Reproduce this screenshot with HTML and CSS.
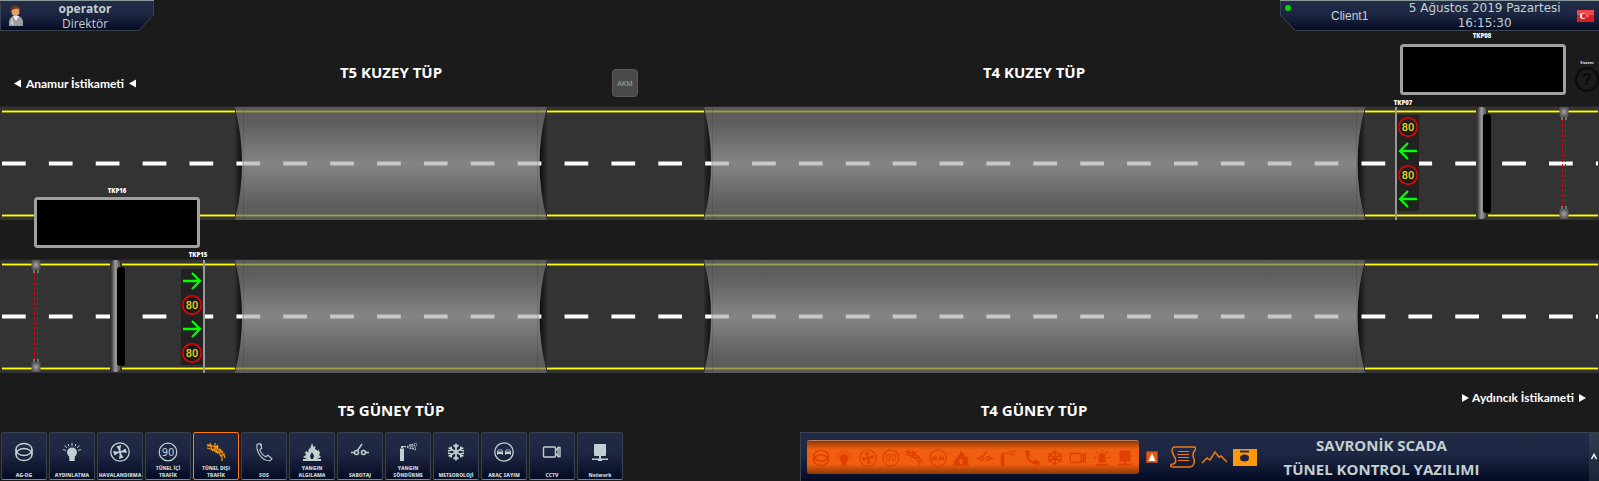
FILE: index.html
```html
<!DOCTYPE html>
<html lang="tr">
<head>
<meta charset="utf-8">
<title>Savronik SCADA</title>
<link rel="stylesheet" href="styles.css">
</head>
<body>
<svg class="defs" aria-hidden="true">
  <symbol id="i-ring" viewBox="0 0 20 20"><g fill="none" stroke="currentColor" stroke-width="1.500"><ellipse cx="10" cy="7.500" rx="8" ry="6"/><ellipse cx="10" cy="12.500" rx="8" ry="6"/><path d="M2 7v6M18 7v6"/></g></symbol>
  <symbol id="i-bulb" viewBox="0 0 20 20"><path fill="currentColor" d="M10 5.500a5 5 0 0 0-5 5c0 2 1.500 3 2.300 4.500V19h5.400v-4c.8-1.500 2.300-2.500 2.300-4.500a5 5 0 0 0-5-5z"/><path fill="none" stroke="currentColor" d="M10 1v3M6 2l1 2.500M14 2l-1 2.500M2.500 3.500l2.500 2.500M17.500 3.500l-2.500 2.500M1 7.500l3 1M19 7.500l-3 1"/></symbol>
  <symbol id="i-fan" viewBox="0 0 20 20"><circle cx="10" cy="10" r="9.200" fill="none" stroke="currentColor" stroke-width="1.300"/><path fill="currentColor" d="M10 10L6.500 4.500 11 3zM10 10l5.500-3.500L17 11zM10 10l3.500 5.500L9 17zM10 10l-5.500 3.500L3 9z"/><circle cx="10" cy="10" r="1.800" fill="currentColor"/></symbol>
  <symbol id="i-90" viewBox="0 0 20 20"><circle cx="10" cy="10" r="8.800" fill="none" stroke="currentColor" stroke-width="1.200"/><text x="10" y="13.800" class="i-num">90</text></symbol>
  <symbol id="i-road" viewBox="0 0 20 20"><path fill="none" stroke="currentColor" stroke-width="1.200" d="M1 2.500l7 2 6 3.500 4 5 1 3M1 6l7 2 5 3 3 4v4M1 4h7M4 1l2 7M9 1v9M6 9l6-6M12 4l-2 7M15 7l-4 4M19 12l-5 2M13 11l4-2"/></symbol>
  <symbol id="i-phone" viewBox="0 0 20 20"><path fill="none" stroke="currentColor" stroke-width="1.100" d="M3 2.500l3-1 1.800 4.500-2 1.800c1 3 3 5.500 6 7l2-1.500 4.200 3.500-2 2c-4 0-8-2-10.500-6S2.500 6 3 2.500zM7.300 2v2.500"/></symbol>
  <symbol id="i-call" viewBox="0 0 20 20"><path fill="currentColor" d="M2.500 2l4-.5 1.500 5-2 2c1.200 2.500 3 4.300 5.500 5.500l2-2 5 1.500-.5 4.500C9 18.500 2 11 2.500 2z"/></symbol>
  <symbol id="i-fire" viewBox="0 0 20 20"><path fill="currentColor" d="M10 1l1.500 4 2-1-.5 3 3 2 .5-1.500L18 11l-1 2 2 2-4 2h4v2H1v-2h4l-4-2 3-2-1-3 2-1 1 2 1-5 1 1z"/><path class="i-hole" d="M10 10l2 4-1 3H9l-1-3z"/></symbol>
  <symbol id="i-switch" viewBox="0 0 20 20"><g fill="none" stroke="currentColor" stroke-width="1.500"><circle cx="6.500" cy="10.500" r="2"/><circle cx="13.500" cy="10.500" r="2"/><path d="M1 10.500h3.500M15.500 10.500H19M7.500 8.500L12 2"/></g></symbol>
  <symbol id="i-ext" viewBox="0 0 20 20"><path fill="currentColor" d="M2 6.500h4V19H2zM3 4h2v2H3zM4 4h4v1.200H4z"/><path fill="none" stroke="currentColor" stroke-dasharray="1.500 1" d="M9 4.500L19 1M9 5l10 0M9 5.500L18 8M11 3l5-1M12 6l6 1M13 4l6-1"/></symbol>
  <symbol id="i-snow" viewBox="0 0 20 20"><g fill="none" stroke="currentColor" stroke-width="1.700"><path d="M10 1.500v17M2.600 5.800l14.800 8.400M17.400 5.800L2.600 14.200M7.500 3L10 5.500 12.500 3M7.500 17l2.500-2.500 2.500 2.500M2 9l3.500-1L5 4.500M18 11l-3.500 1 .5 3.500M18 9l-3.500-1 .5-3.500M2 11l3.500 1L5 15.500"/></g></symbol>
  <symbol id="i-cars" viewBox="0 0 20 20"><circle cx="10" cy="10" r="9.200" fill="none" stroke="currentColor" stroke-width="1.300"/><path fill="currentColor" d="M4 7.500h4l1 2.300v3H8v-.8H4v.8H3v-3zM12 7.500h4l1 2.300v3h-1v-.8h-4v.8h-1v-3z"/><path class="i-hole" d="M4.500 8.300h3l.4 1.200H4.100zM12.500 8.300h3l.4 1.200h-3.800z"/></symbol>
  <symbol id="i-cam" viewBox="0 0 20 20"><g fill="none" stroke="currentColor" stroke-width="1.400"><rect x="1.500" y="5" width="12" height="10" rx="1"/><path d="M13.500 8.500L16 6v8l-2.500-2.500M16 5.500h2v9h-2z"/></g></symbol>
  <symbol id="i-net" viewBox="0 0 20 20"><path fill="currentColor" d="M4 3q0-1 1-1h10q1 0 1 1v10q0 1-1 1H5q-1 0-1-1zM9 14h2v2.500h7V18h-6v1H8v-1H2v-1.500h7z"/></symbol>
  <symbol id="i-siren" viewBox="0 0 20 20"><path fill="currentColor" d="M6 15V8.500a4 4 0 0 1 8 0V15zM3 16.500h14V19H3z"/><path fill="none" stroke="currentColor" stroke-width="1.400" d="M10 1v2M4 3l2 2M16 3l-2 2M1 9.500h3M16 9.500h3"/></symbol>
</svg>

<header class="top">
  <div class="user">
    <svg class="shape" viewBox="0 0 154 31" aria-hidden="true">
      <defs><linearGradient id="navy" x1="0" y1="0" x2="0" y2="1"><stop offset="0" stop-color="#232c46"/><stop offset=".45" stop-color="#1d2642"/><stop offset="1" stop-color="#040b24"/></linearGradient></defs>
      <path d="M.5.500h153V15L138.500 30.500H.5z" fill="url(#navy)" stroke="#3b444e"/><path d="M0 .500h154" stroke="#87989a"/>
    </svg>
    <svg class="avatar" viewBox="0 0 16 22" aria-hidden="true">
      <path d="M1 21v-4c0-3 2-5 4-6h6c2 1 4 3 4 6v4z" fill="#9a9c9e"/><path d="M5 11l3 5 3-5z" fill="#f4f4f4"/><path d="M4 12l2 8-4-1z" fill="#c5c7c8"/>
      <ellipse cx="7.500" cy="6.500" rx="4" ry="5" fill="#e0a070"/><path d="M2.500 7C1 1 6 0 8 .5c4 0 5 3 4 7l-1.500-4-5 .5z" fill="#6b3a1c"/>
    </svg>
    <div class="who"><strong>operator</strong><span>Direktör</span></div>
  </div>
  <div class="station">
    <svg class="shape" viewBox="0 0 319 31" preserveAspectRatio="none" aria-hidden="true">
      <path d="M.5.500H320v30H15.500L.5 15.500z" fill="url(#navy)" stroke="#3b444e"/><path d="M0 .500h320" stroke="#87989a"/>
    </svg>
    <i class="led"></i>
    <span class="client">Client1</span>
    <time class="clock" datetime="2019-08-05T16:15:30">5 Ağustos 2019 Pazartesi<br>16:15:30</time>
    <svg class="flag" viewBox="0 0 17 12" role="img" aria-label="Türkçe"><rect width="17" height="12" fill="#e01b22"/><path d="M0 0h17v5H0z" fill="#ee4a4e"/><circle cx="6" cy="6" r="3" fill="#fff"/><circle cx="7" cy="6" r="2.300" fill="#e6282e"/><path d="M9 6l1-.4.600-1 .2 1.100 1.200.3-1.200.4-.2 1-.6-1z" fill="#fff"/></svg>
  </div>
</header>

<main class="map">
<svg class="canvas" viewBox="0 31 1599 401" role="img" aria-label="Tünel trafik haritası">
  <defs>
    <linearGradient id="tube" x1="0" y1="0" x2="0" y2="1"><stop offset="0" stop-color="#6c6c6c"/><stop offset=".15" stop-color="#757575"/><stop offset=".5" stop-color="#adadad"/><stop offset=".85" stop-color="#757575"/><stop offset="1" stop-color="#6c6c6c"/></linearGradient>
    <linearGradient id="pole"><stop offset="0" stop-color="#333"/><stop offset=".5" stop-color="#9a9a9a"/><stop offset="1" stop-color="#555"/></linearGradient>
    <linearGradient id="mouthL"><stop offset="0" stop-color="#2e2e2e"/><stop offset="1" stop-color="#0c0c0c"/></linearGradient>
    <linearGradient id="mouthR"><stop offset="0" stop-color="#0c0c0c"/><stop offset="1" stop-color="#2e2e2e"/></linearGradient>
    <radialGradient id="knob"><stop offset="0" stop-color="#a5a5a5"/><stop offset="1" stop-color="#555"/></radialGradient>
    <g id="road">
      <rect x="0" y="107" width="1599" height="113" fill="#333"/>
      <path d="M0 106.500h1599" stroke="#262626"/>
      <path d="M2 111.500h1596M2 215.500h1596" stroke="#8a8a14" stroke-width="3"/>
      <path d="M2 111.500h1596M2 215.500h1596" stroke="#ff0"/>
      <path d="M235 107q15 56 0 113z" fill="url(#mouthL)"/><path d="M704 107q15 56 0 113z" fill="url(#mouthL)"/>
      <path d="M547 107q-15 56 0 113z" fill="url(#mouthR)"/><path d="M1365 107q-15 56 0 113z" fill="url(#mouthR)"/>
      <path d="M2 163.500h1596" stroke="#fff" stroke-width="4" stroke-dasharray="23.700 23.180"/>
      <path d="M235 107H547q-15 56 0 113H235q14-57 0-113zM704 107h661q-15 56 0 113H704q14-57 0-113z" fill="url(#tube)" opacity=".67"/>
      <path d="M243.500 107v113M537.500 107v113M712.500 107v113M1356.500 107v113" stroke="#000" opacity=".1"/>
    </g>
    <g id="limit"><circle r="9.300" fill="#1c1c1c" stroke="#f00000" stroke-width="1.600"/><text y="4" class="limit">80</text></g>
    <path id="arrow" d="M-8 0H9M0-8L-8 0l8 8" fill="none" stroke="#0f0" stroke-width="2.300"/>
    <g id="lamp"><rect x="-1" y="109" width="12" height="108" fill="#333"/><rect x="0" y="107" width="9" height="112" rx="4" fill="url(#pole)"/><rect x="6" y="114" width="8" height="99" rx="3" fill="#000"/></g>
    <g id="beam"><path d="M-1.500 119v89M1.500 119v89" stroke="#d00" stroke-dasharray="3 2"/><rect x="-4.500" y="107" width="9" height="10" rx="1" fill="url(#knob)"/><rect x="-4.500" y="209" width="9" height="10" rx="1" fill="url(#knob)"/><path d="M-2 117v3M2 117v3M-2 206v3M2 206v3" stroke="#888" stroke-width="1.500"/></g>
  </defs>
  <use href="#road"/>
  <use href="#road" y="153"/>

  <g class="title">
    <text x="391" y="78">T5 KUZEY TÜP</text><text x="1034" y="78">T4 KUZEY TÜP</text>
    <text x="391" y="416">T5 GÜNEY TÜP</text><text x="1034" y="416">T4 GÜNEY TÜP</text>
  </g>
  <g class="way">
    <text x="75" y="88">Anamur İstikameti</text><text x="1523" y="402">Aydıncık İstikameti</text>
    <path d="M21 79.500v8l-7-4zM136 79.500v8l-7-4zM1462 394v8l7-4zM1579 394v8l7-4z"/>
  </g>

  <g class="board"><rect x="1401.500" y="45.500" width="163" height="48" rx="2"/><rect x="35.500" y="198.500" width="163" height="48" rx="2"/></g>
  <g class="tag"><text x="1482" y="38">TKP08</text><text x="1403" y="105">TKP07</text><text x="117" y="193">TKP16</text><text x="198" y="257">TKP15</text></g>
  <text class="hint" x="1587" y="64">Sistem</text>

  <rect x="1397" y="115" width="22" height="96" fill="#222"/><rect x="1395" y="107" width="2" height="113" fill="#999"/>
  <use href="#limit" x="1408" y="127"/><use href="#arrow" x="1408" y="151"/><use href="#limit" x="1408" y="175"/><use href="#arrow" x="1408" y="199"/>
  <use href="#lamp" x="1477"/><use href="#beam" x="1564"/>

  <rect x="181" y="269" width="22" height="96" fill="#222"/><rect x="203" y="260" width="2" height="113" fill="#999"/>
  <use href="#arrow" transform="translate(192 281) scale(-1 1)"/><use href="#limit" x="192" y="305"/><use href="#arrow" transform="translate(192 329) scale(-1 1)"/><use href="#limit" x="192" y="353"/>
  <use href="#lamp" x="111" y="153"/><use href="#beam" x="36" y="153"/>

  <foreignObject x="612" y="69" width="26" height="28"><button class="akm">AKM</button></foreignObject>
  <foreignObject x="1575" y="67" width="24" height="25"><button class="help" aria-label="Sistem">?</button></foreignObject>
</svg>
</main>

<footer class="bottom">
  <nav class="tiles">
    <button class="tile"><svg><use href="#i-ring"/></svg><span>AG-OG</span></button>
    <button class="tile"><svg><use href="#i-bulb"/></svg><span>AYDINLATMA</span></button>
    <button class="tile"><svg><use href="#i-fan"/></svg><span>HAVALANDIRMA</span></button>
    <button class="tile"><svg><use href="#i-90"/></svg><span>TÜNEL İÇİ<br>TRAFİK</span></button>
    <button class="tile active"><svg><use href="#i-road"/></svg><span>TÜNEL DIŞI<br>TRAFİK</span></button>
    <button class="tile"><svg><use href="#i-phone"/></svg><span>SOS</span></button>
    <button class="tile"><svg><use href="#i-fire"/></svg><span>YANGIN<br>ALGILAMA</span></button>
    <button class="tile"><svg><use href="#i-switch"/></svg><span>SABOTAJ</span></button>
    <button class="tile"><svg><use href="#i-ext"/></svg><span>YANGIN<br>SÖNDÜRME</span></button>
    <button class="tile"><svg><use href="#i-snow"/></svg><span>METEOROLOJİ</span></button>
    <button class="tile"><svg><use href="#i-cars"/></svg><span>ARAÇ SAYIM</span></button>
    <button class="tile"><svg><use href="#i-cam"/></svg><span>CCTV</span></button>
    <button class="tile"><svg><use href="#i-net"/></svg><span>Network</span></button>
  </nav>
  <section class="status">
    <div class="alarms">
      <svg><use href="#i-ring"/></svg><svg><use href="#i-bulb"/></svg><svg><use href="#i-fan"/></svg><svg><use href="#i-90"/></svg><svg><use href="#i-road"/></svg><svg><use href="#i-cars"/></svg><svg><use href="#i-fire"/></svg><svg><use href="#i-switch"/></svg><svg><use href="#i-ext"/></svg><svg><use href="#i-call"/></svg><svg><use href="#i-snow"/></svg><svg><use href="#i-cam"/></svg><svg><use href="#i-siren"/></svg><svg><use href="#i-net"/></svg>
    </div>
    <button class="up" aria-label="Alarmlar"><svg viewBox="0 0 10 10"><path d="M5 1l3.500 8h-7z" fill="#fff"/></svg></button>
    <div class="tools">
      <button aria-label="Rapor"><svg viewBox="0 0 26 22"><g fill="none" stroke="#f07a10" stroke-width="1.500"><path d="M4 1h20c2 0 2 2 1 3-3 4-2 6-1 9 1 4-1 8-4 8H3c-3 0-3-3 0-3 4-1 3-5 1-8C2 7 1 2 4 1z"/><path d="M8 5.500h11M7 8.500h12M8 11.500h11M8 14.500h11" stroke-width="1"/></g></svg></button>
      <button aria-label="Trend"><svg viewBox="0 0 26 22"><path d="M1 17l5-5 3 2 5-8 4 5 2-1 6 6" fill="none" stroke="#f07a10" stroke-width="1.500"/></svg></button>
      <button aria-label="Arşiv"><svg viewBox="0 0 26 22"><path d="M1 3h24v17H1z" fill="#ff980c"/><path d="M8 4.500h9v2H8z" fill="#30303a"/><ellipse cx="12.500" cy="12" rx="4.500" ry="3.500" fill="#20263c"/></svg></button>
    </div>
    <h1 class="brand">SAVRONİK SCADA<br>TÜNEL KONTROL YAZILIMI</h1>
    <button class="more" aria-label="Aç"><svg viewBox="0 0 8 8"><path d="M1.500 6L4 1.500 6.500 6" fill="none" stroke="#fff" stroke-width="1.500"/></svg></button>
  </section>
</footer>
</body>
</html>
```
FILE: styles.css
```css
* { box-sizing: border-box; }
body {
  margin: 0;
  min-height: 100vh;
  display: flex;
  flex-direction: column;
  background: #1b1b1b;
  color: #c3cfd0;
  font-family: "Open Sans", "Noto Sans", sans-serif;
  --hole: #141d38;
}
button { margin: 0; padding: 0; border: 0; background: none; color: inherit; font: inherit; cursor: pointer; }
svg { display: block; }
.defs { display: none; }

.top { display: flex; justify-content: space-between; height: 31px; }
.user, .station { position: relative; display: flex; align-items: center; }
.user { width: 154px; padding-left: 8px; }
.station { width: 319px; padding-right: 5px; }
.shape { position: absolute; inset: 0; width: 100%; height: 100%; }
.avatar { position: relative; width: 16px; height: 22px; }
.who {
  position: relative;
  flex: 1;
  padding-right: 8px;
  display: flex;
  flex-direction: column;
  text-align: center;
  font-size: 12px;
  line-height: 15px;
}
.led {
  position: absolute;
  left: 5px;
  top: 5px;
  width: 6px;
  height: 6px;
  border-radius: 50%;
  background: #00d800;
}
.client { position: relative; margin-left: 51px; font: 12px/16px "Liberation Sans", sans-serif; }
.clock { position: relative; flex: 1; padding-left: 24px; text-align: center; font: 12px/15px "DejaVu Sans", sans-serif; }
.flag { position: relative; width: 17px; height: 12px; }

.map { flex: 1; }
.canvas { width: 100%; height: auto; }
.title text, .way text, .tag text, .hint, .limit, .i-num { text-anchor: middle; }
.title { fill: #fff; font-weight: 700; font-size: 15px; }
.way { fill: #fff; font: 700 12px "Lato", sans-serif; }
.board { fill: #000; stroke: #a0a0a0; stroke-width: 3px; }
.tag { fill: #fff; font-weight: 800; font-size: 6px; }
.hint { fill: #ddd; font-weight: 700; font-size: 4px; }
.limit { fill: #e6d41c; font: 500 11px "Roboto", sans-serif; }
.akm {
  display: block;
  width: 26px;
  height: 28px;
  border: 1px solid #5a5a5a;
  border-radius: 4px;
  background: #4a4a4a;
  color: #949494;
  font-weight: 600;
  font-size: 7px;
}
.help {
  display: block;
  width: 24px;
  height: 25px;
  border: 2px solid #0a0a0a;
  border-radius: 50%;
  color: #080808;
  font: 700 16px/20px "Liberation Sans", sans-serif;
}

.bottom {
  display: flex;
  justify-content: space-between;
  padding-bottom: 1px;
  background: linear-gradient(90deg, #1b1b1b 50%, #77705a 50%, #77705a 75%, #1b1b1b 75%) bottom / 100% 1px no-repeat;
}
.tiles { display: flex; gap: 2px; padding-left: 1px; }
.tile {
  width: 46px;
  height: 48px;
  padding-top: 9px;
  display: flex;
  flex-direction: column;
  align-items: center;
  border: 1px solid #3a434d;
  border-bottom-color: #7d898c;
  border-radius: 2px;
  background: linear-gradient(#232c46, #1d2642 45%, #040b24);
  font-weight: 800;
  font-size: 5px;
  line-height: 7px;
}
.tile svg { width: 20px; height: 20px; }
.tile span { flex: 1; display: flex; flex-direction: column; justify-content: flex-end; white-space: nowrap; }
.tile.active { border: 1px solid #ff7a10; }
.tile.active svg { color: #ff980c; }
.i-num { fill: currentColor; font: 10px "DejaVu Sans", sans-serif; }
.i-hole { fill: var(--hole); }

.status {
  width: 799px;
  display: flex;
  align-items: center;
  border: 1px solid #3a434d;
  border-right: 0;
  border-bottom-color: #7d898c;
  padding-left: 6px;
  background: linear-gradient(#232c46, #1d2642 45%, #040b24);
}
.alarms {
  --hole: #f05e10;
  width: 332px;
  height: 34px;
  padding: 0 2px;
  display: flex;
  align-items: center;
  justify-content: space-around;
  border-radius: 3px;
  border-top: 1px solid #b08060;
  background: linear-gradient(#8a3808, #f05e10 25%, #f05e10 70%, #8a3808);
  color: #df3f00;
}
.alarms svg { width: 18px; height: 18px; }
.up { width: 12px; height: 12px; margin-left: 7px; border: 1px solid #a04020; background: #e8580f; }
.tools { display: flex; gap: 5px; margin-left: 12px; }
.tools svg { width: 26px; height: 22px; }
.brand { flex: 1; margin: 0; padding-right: 84px; text-align: center; font-size: 15px; line-height: 24px; white-space: nowrap; }
.more { width: 10px; align-self: stretch; display: flex; align-items: center; justify-content: center; background: linear-gradient(#343d50, #1c2438); }
.more svg { width: 8px; height: 8px; }
```
